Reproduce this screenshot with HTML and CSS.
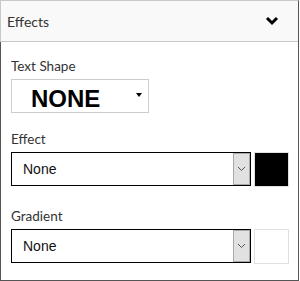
FILE: index.html
```html
<html>
	<head>
	<meta charset="utf-8"/>
		<link rel="stylesheet" href="styles.css">
	</head>
	<body>
		<div class="panel">
			<div class="panel-head">
				<span class="title">Effects</span>
				<svg class="chev" width="14" height="10" viewBox="0 0 14 10"><polyline points="2,2 7,7 12,2" fill="none" stroke="#000" stroke-width="3"/></svg>
			</div>
			<div class="panel-body">
				<div class="field first">
					<div class="label">Text Shape</div>
					<div class="shape">
						<span class="shape-val">NONE</span>
						<span class="tri"></span>
					</div>
				</div>
				<div class="field">
					<div class="label">Effect</div>
					<div class="row">
						<div class="sel">
							<span class="sel-val">None</span>
							<span class="sel-btn"><svg width="9" height="6" viewBox="0 0 9 6"><polyline points="1,1 4.5,4.5 8,1" fill="none" stroke="#555" stroke-width="1"/></svg></span>
						</div>
						<div class="swatch black"></div>
					</div>
				</div>
				<div class="field">
					<div class="label">Gradient</div>
					<div class="row">
						<div class="sel">
							<span class="sel-val">None</span>
							<span class="sel-btn"><svg width="9" height="6" viewBox="0 0 9 6"><polyline points="1,1 4.5,4.5 8,1" fill="none" stroke="#555" stroke-width="1"/></svg></span>
						</div>
						<div class="swatch"></div>
					</div>
				</div>
			</div>
		</div>
	</body>
</html>
```
FILE: styles.css
```css
body{
	margin: 0;
	font-family: Lato, "Open Sans", sans-serif;
	color: #333;
}
.panel{
	width: 299px;
	height: 281px;
	box-sizing: border-box;
	border-top: solid 1px #c8c8c8;
	border-right: solid 1px #555;
	display: flex;
	flex-direction: column;
}
.panel-head{
	flex-shrink: 0;
	height: 40px;
	background: #f9f9f9;
	border-bottom: solid 1px #c8c8c8;
	border-left: solid 1px #c8c8c8;
	display: flex;
	align-items: center;
	justify-content: space-between;
	padding: 0 19px 0 6px;
}
.title{
	font-size: 14px;
	color: #333;
}
.chev{
	margin-top: -1px;
}
.panel-body{
	flex: 1;
	border-left: solid 1px #555;
	border-bottom: solid 1px #555;
	padding: 16px 0 0 10px;
}
.field{
	margin-bottom: 21px;
}
.field.first{
	margin-bottom: 18px;
}
.field:last-child{
	margin-bottom: 0;
}
.label{
	font-size: 13.5px;
	line-height: 16px;
	margin-bottom: 5px;
}
.shape{
	width: 138px;
	height: 34px;
	box-sizing: border-box;
	border: solid 1px #ccc;
	display: flex;
	align-items: center;
	justify-content: space-between;
	padding: 5px 6px 0 19px;
}
.shape-val{
	font-family: "Liberation Sans", Arial, sans-serif;
	font-weight: bold;
	font-size: 24px;
	color: #000;
}
.tri{
	width: 0;
	height: 0;
	border-left: 3.5px solid transparent;
	border-right: 3.5px solid transparent;
	border-top: 4px solid #000;
	margin-top: -8px;
}
.row{
	display: flex;
	gap: 3px;
}
.sel{
	width: 240px;
	height: 34px;
	box-sizing: border-box;
	border: solid 1px #000;
	display: flex;
	align-items: stretch;
	justify-content: space-between;
}
.sel-val{
	font-family: "Liberation Sans", Arial, sans-serif;
	font-size: 14px;
	color: #111;
	padding-left: 11px;
	display: flex;
	align-items: center;
}
.sel-btn{
	width: 17px;
	box-sizing: border-box;
	background: #e1e1e1;
	border: solid 1px #a8a8a8;
	display: flex;
	align-items: center;
	justify-content: center;
}
.swatch{
	width: 35px;
	height: 35px;
	box-sizing: border-box;
	border: solid 1px #e0e0e0;
	background: #fff;
}
.swatch.black{
	background: #000;
}
```
